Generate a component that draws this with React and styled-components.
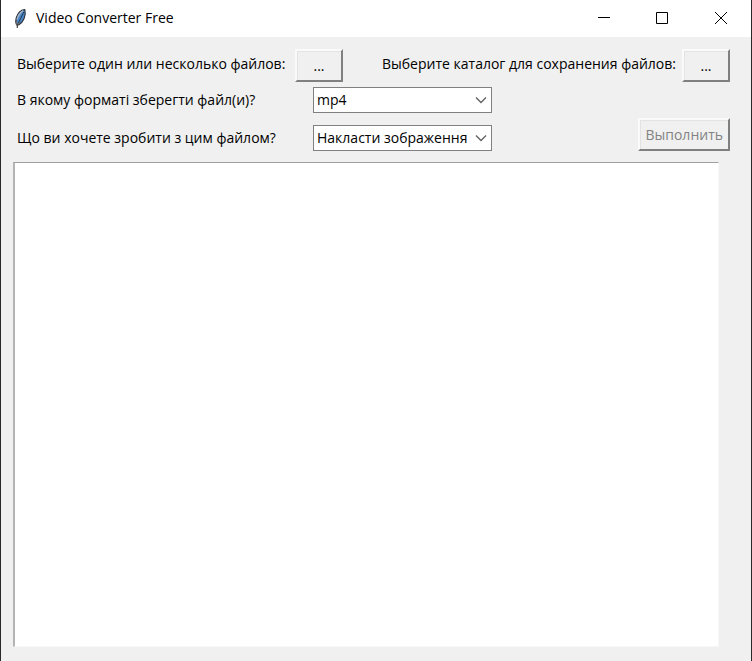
import React, { useState } from "react";

//npm imports
import styled, { createGlobalStyle, ThemeProvider } from "styled-components";

const theme = {
    face: "#f0f0f0",
    white: "#ffffff",
    text: "#000000",
    disabled: "#838383",
    shadow: "#808080",
    light_shadow: "#a0a0a0",
    frame: "#29292b",
}

//styled components
const GlobalStyle = createGlobalStyle`
    *{
        box-sizing: border-box;
    }
    body{
        margin: 0;
        font-family: "Open Sans", "Noto Sans", sans-serif;
        font-size: 14px;
        line-height: 20px;
        color: ${props => props.theme.text};
    }
    button, select, textarea{
        margin: 0;
        font: inherit;
        color: inherit;
        border-radius: 0;
    }
`

const Window = styled.div`
    min-height: 100vh;
    display: flex;
    flex-direction: column;
    background-color: ${props => props.theme.face};
    border: 1px solid ${props => props.theme.frame};
    border-width: 0 1px;
`

const TitleBar = styled.header`
    height: 37px;
    display: flex;
    align-items: center;
    padding-left: 11px;
    background-color: ${props => props.theme.white};
`

const Title = styled.h1`
    flex: 1;
    margin: 0 0 0 7px;
    padding-bottom: 2px;
    font-size: 14px;
    font-weight: 400;
`

const CaptionButton = styled.button`
    width: 58px;
    height: 37px;
    display: flex;
    align-items: center;
    justify-content: center;
    padding: 0 0 2px;
    border: none;
    background: transparent;
    &:last-child{
        width: 60px;
    }
`

const Panel = styled.main`
    flex: 1;
    display: flex;
    flex-direction: column;
    gap: 11px;
    padding: 12px 21px 14px 12px;
`

const Form = styled.form`
    display: flex;
    flex-direction: column;
    gap: 5px;
    padding-left: 4px;
`

const Row = styled.div`
    display: flex;
    align-items: ${props => props.$align || "center"};
    justify-content: space-between;
`

const Field = styled.div`
    display: flex;
    align-items: center;
    gap: 6px;
`

const ButtonLabel = styled.label`
    min-width: 272px;
    padding-bottom: 4px;
    white-space: nowrap;
`

const SelectLabel = styled.label`
    width: 290px;
    white-space: nowrap;
`

const Button = styled.button`
    min-width: 48px;
    height: 33px;
    padding: 0 5px;
    background-color: ${props => props.theme.face};
    border: 2px solid;
    border-color: #fafafa ${props => props.theme.shadow} ${props => props.theme.shadow} #fafafa;
    box-shadow: inset 1px 1px 0 #e3e3e3;
    &:disabled{
        color: ${props => props.theme.disabled};
    }
`

const SelectBox = styled.div`
    width: 179px;
    height: 26px;
    display: grid;
    align-items: center;
    background-color: ${props => props.theme.white};
    border: 1px solid ${props => props.theme.shadow};
    select, svg{
        grid-area: 1 / 1;
    }
    select{
        width: 154px;
        height: 24px;
        padding: 0 0 0 3px;
        appearance: none;
        border: none;
        outline: none;
        background: transparent;
        overflow: hidden;
        text-overflow: clip;
    }
    svg{
        justify-self: end;
        margin-right: 4px;
        pointer-events: none;
    }
`

const Log = styled.textarea`
    flex: 1;
    min-height: 120px;
    margin-right: 11px;
    padding: 2px;
    resize: none;
    outline: none;
    background-color: ${props => props.theme.white};
    border: 1px solid #f8f8f8;
    border-top-color: ${props => props.theme.light_shadow};
    border-left: 2px solid #b4b4b4;
`

//icons
const FeatherIcon = () => (
    <svg width="17" height="22" viewBox="0 0 17 22" aria-hidden="true">
        <path d="M12.8 1.5 C8.5 2 5.5 5.5 4.2 10 C3.6 12.5 3.4 14.8 4.4 16.4 L6.6 17 C11 14.5 14.6 8 12.8 1.5Z" fill="#4a86c8" stroke="#2b2f35" strokeWidth="1.1" />
        <path d="M11 2.8 C8.2 4.3 6 7.5 5 11.5" fill="none" stroke="#a9b6c4" strokeWidth="1.4" />
        <path d="M11.8 4 C9.8 8.5 7.2 13 5.4 17" fill="none" stroke="#22384f" strokeWidth="1" />
        <path d="M4.2 12.5 L4.8 17 L8 14.5" fill="none" stroke="#6b6a6a" strokeWidth="1.2" />
        <path d="M5.4 16 L5.3 20" fill="none" stroke="#4a4541" strokeWidth="1.2" />
    </svg>
)

const ChevronIcon = () => (
    <svg width="12" height="8" viewBox="0 0 12 8" aria-hidden="true">
        <path d="M1 1.5 L6 6.5 L11 1.5" fill="none" stroke="#606060" strokeWidth="1.3" />
    </svg>
)

const CaptionIcon = ({ d }) => (
    <svg width="12" height="12" viewBox="0 0 12 12" aria-hidden="true">
        <path d={d} fill="none" stroke="#000000" strokeWidth="1" />
    </svg>
)

//components
const Select = ({ id, options }) => {
    const [value, setValue] = useState(options[0]);

    return (
        <SelectBox>
            <select id={id} value={value} onChange={(e) => setValue(e.target.value)}>
                {options.map(option => <option key={option}>{option}</option>)}
            </select>
            <ChevronIcon />
        </SelectBox>
    )
}

const App = () => {
    return (
        <ThemeProvider theme={theme}>
            <GlobalStyle />
            <Window>
                <TitleBar>
                    <FeatherIcon />
                    <Title>Video Converter Free</Title>
                    <CaptionButton aria-label="Minimize">
                        <CaptionIcon d="M0 5.5 H12" />
                    </CaptionButton>
                    <CaptionButton aria-label="Maximize">
                        <CaptionIcon d="M0.5 0.5 H11.5 V11.5 H0.5 Z" />
                    </CaptionButton>
                    <CaptionButton aria-label="Close">
                        <CaptionIcon d="M0 0 L12 12 M12 0 L0 12" />
                    </CaptionButton>
                </TitleBar>
                <Panel>
                    <Form onSubmit={(e) => e.preventDefault()}>
                        <Row>
                            <Field>
                                <ButtonLabel htmlFor="files">Выберите один или несколько файлов:</ButtonLabel>
                                <Button type="button" id="files">...</Button>
                            </Field>
                            <Field>
                                <ButtonLabel htmlFor="folder">Выберите каталог для сохранения файлов:</ButtonLabel>
                                <Button type="button" id="folder">...</Button>
                            </Field>
                        </Row>
                        <Row>
                            <Field>
                                <SelectLabel htmlFor="format">В якому форматі зберегти файл(и)?</SelectLabel>
                                <Select id="format" options={["mp4"]} />
                            </Field>
                        </Row>
                        <Row $align="flex-end">
                            <Field>
                                <SelectLabel htmlFor="action">Що ви хочете зробити з цим файлом?</SelectLabel>
                                <Select id="action" options={["Накласти зображення"]} />
                            </Field>
                            <Button type="submit" disabled>Выполнить</Button>
                        </Row>
                    </Form>
                    <Log aria-label="Log" />
                </Panel>
            </Window>
        </ThemeProvider>
    )
}

export default App;
